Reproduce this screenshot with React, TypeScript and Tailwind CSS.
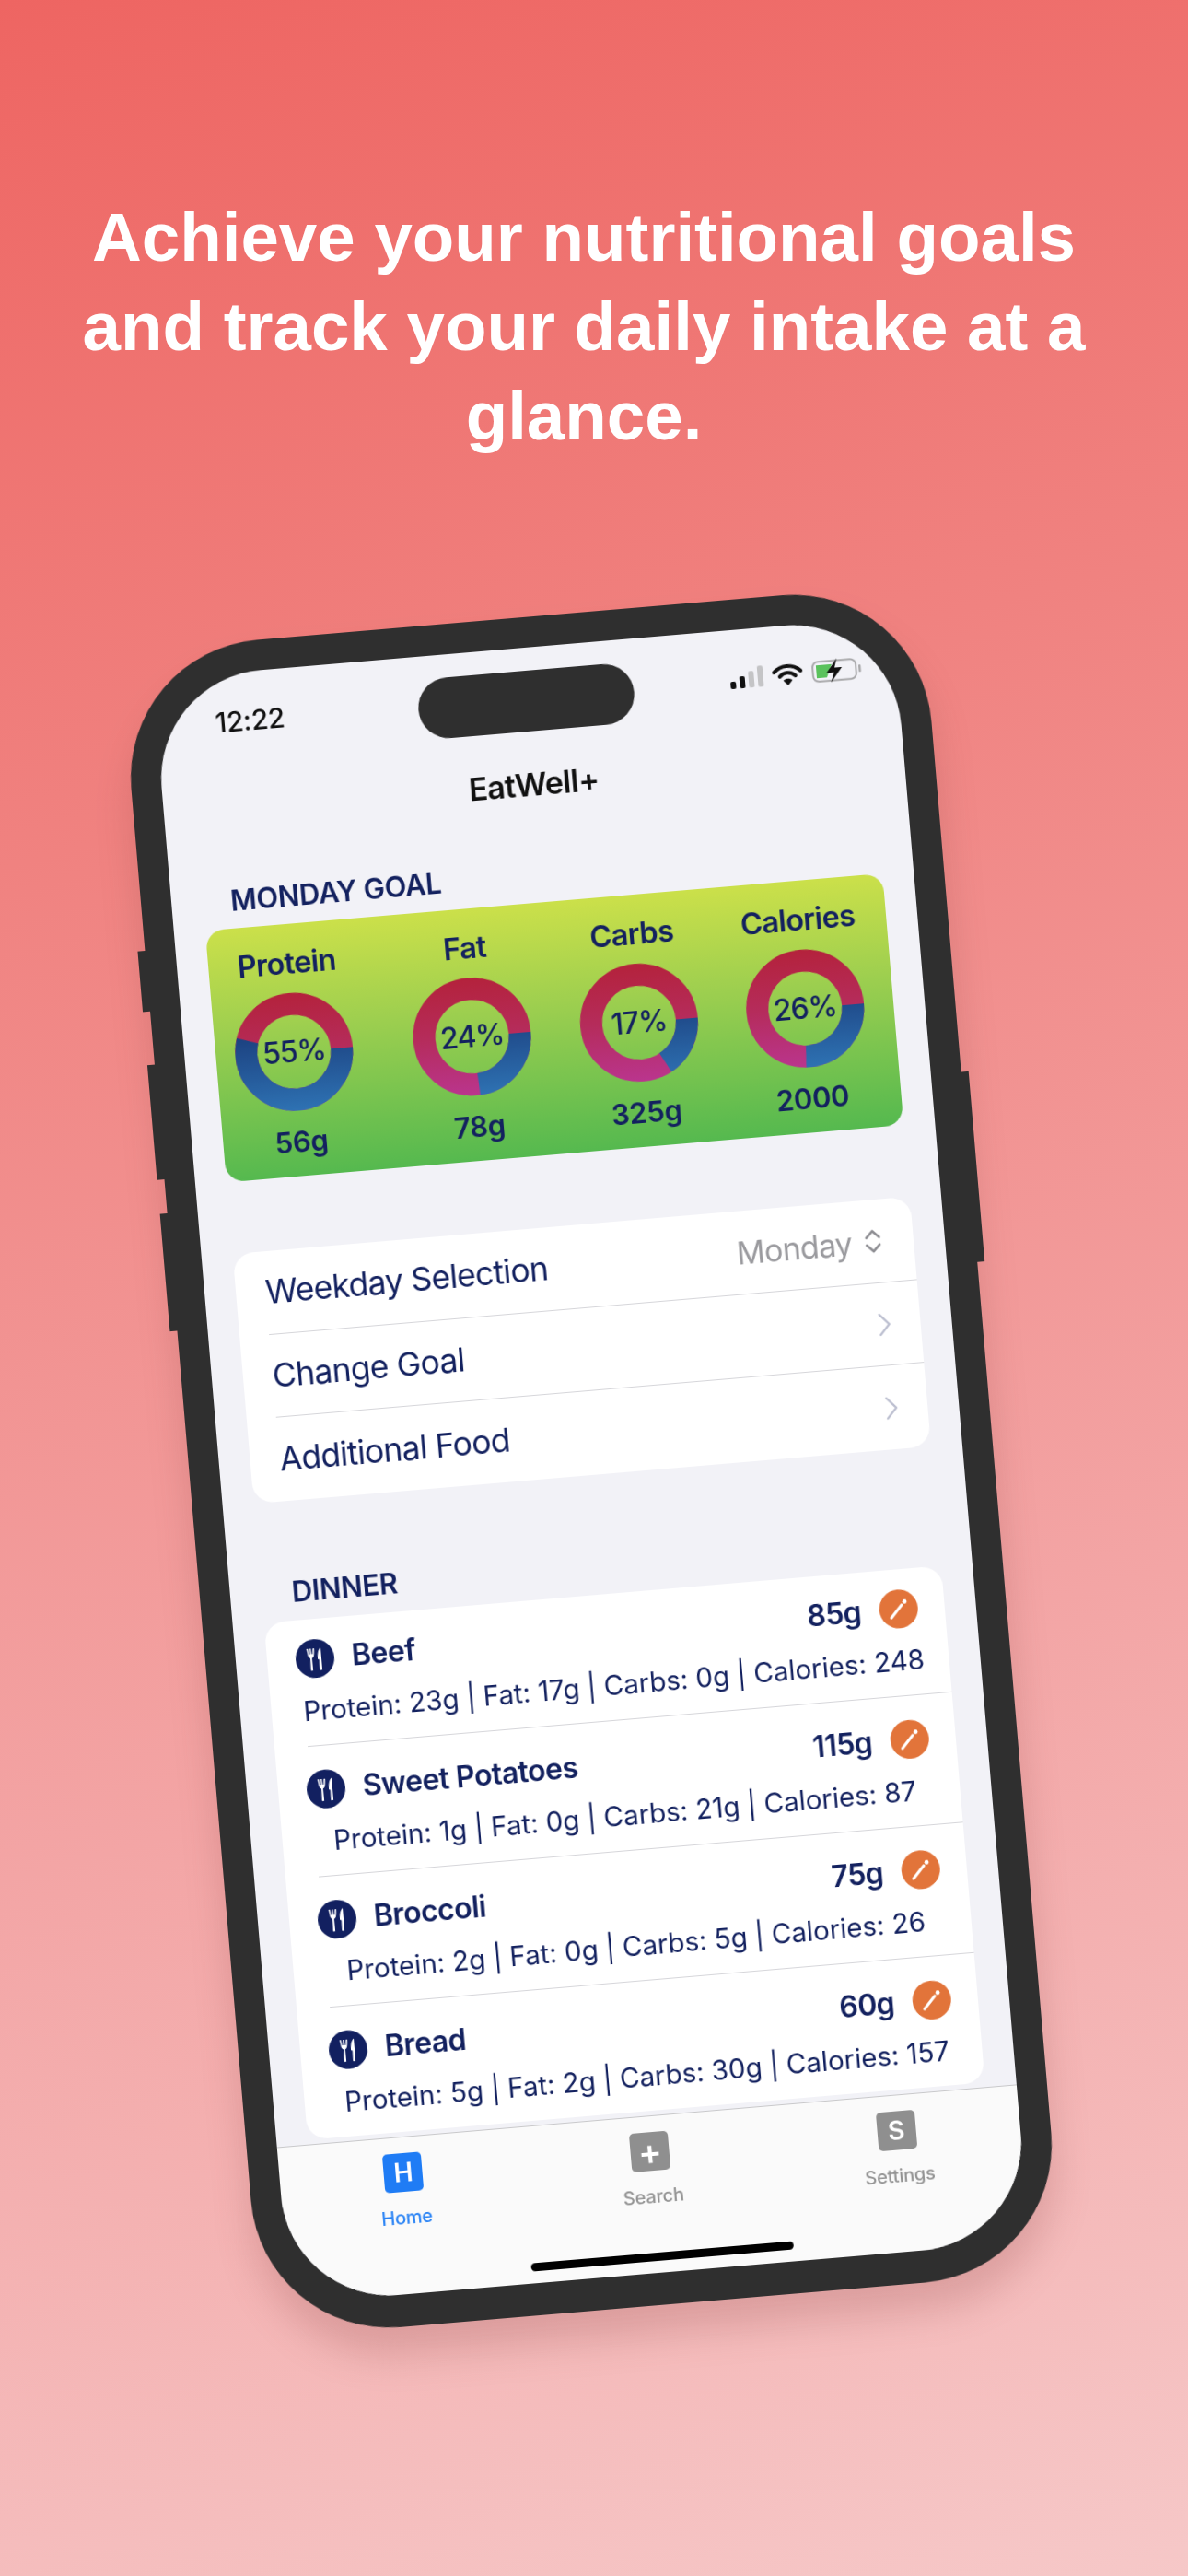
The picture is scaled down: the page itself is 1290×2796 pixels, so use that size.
import React from "react";

const goals = [
  { label: "Protein", pct: 55, value: "56g", cls: "ml-[21px]" },
  { label: "Fat", pct: 24, value: "78g", cls: "ml-[66px]" },
  { label: "Carbs", pct: 17, value: "325g", cls: "ml-[54px]" },
  { label: "Calories", pct: 26, value: "2000", cls: "ml-[53px]" },
];

const foods = [
  { name: "Beef", weight: "85g", info: "Protein: 23g | Fat: 17g | Carbs: 0g | Calories: 248", cls: "pt-[22px] pb-[20px] border-b" },
  { name: "Sweet Potatoes", weight: "115g", info: "Protein: 1g | Fat: 0g | Carbs: 21g | Calories: 87", cls: "pt-[26px] pb-[20px] border-b" },
  { name: "Broccoli", weight: "75g", info: "Protein: 2g | Fat: 0g | Carbs: 5g | Calories: 26", cls: "pt-[26px] pb-[20px] border-b" },
  { name: "Bread", weight: "60g", info: "Protein: 5g | Fat: 2g | Carbs: 30g | Calories: 157", cls: "pt-[26px] pb-[20px]" },
];

function Ring({ pct, id }: { pct: number; id: string }) {
  const r = 52;
  const c = 2 * Math.PI * r;
  return (
    <div className="relative w-[128px] h-[128px]">
      <svg viewBox="0 0 128 128" className="w-full h-full">
        <defs>
          <linearGradient id={`rest-${id}`} gradientUnits="userSpaceOnUse" x1="0" y1="0" x2="0" y2="128">
            <stop offset="0" stopColor="#b4223c" />
            <stop offset="0.5" stopColor="#b52c5c" />
            <stop offset="1" stopColor="#ba358e" />
          </linearGradient>
          <linearGradient id={`fill-${id}`} gradientUnits="userSpaceOnUse" x1="0" y1="40" x2="0" y2="128">
            <stop offset="0" stopColor="#1b3f7e" />
            <stop offset="1" stopColor="#2e72b3" />
          </linearGradient>
        </defs>
        <circle cx="64" cy="64" r={r} fill="none" stroke={`url(#rest-${id})`} strokeWidth="24" />
        <circle cx="64" cy="64" r={r} fill="none" stroke={`url(#fill-${id})`} strokeWidth="24" strokeDasharray={`${(pct / 100) * c} ${c}`} />
      </svg>
      <div className="absolute inset-0 flex items-center justify-center text-[32px] font-medium tracking-[-0.03em] text-[#13215f]">{pct}%</div>
    </div>
  );
}

function Utensils() {
  return (
    <svg viewBox="0 0 42 42" className="w-[42px] h-[42px] shrink-0">
      <circle cx="21" cy="21" r="21" fill="#122060" />
      <path d="M12.5 10 L13.5 17 C13.7 19 15 20 16 20.6 L15.6 33 C15.6 34.6 18 34.6 18 33 L17.8 20.6 C19 20 20 19 20.2 17 L21 10 L19.4 10 L18.6 16 L17.6 16 L17.4 10 L16 10 L15.8 16 L14.8 16 L14.2 10 Z" fill="#fff" />
      <path d="M28 9.5 C25 11.5 24 16 24 22 L25.6 22.4 L25.3 33 C25.3 34.6 28 34.6 28 33 Z" fill="#fff" />
    </svg>
  );
}

function Pencil() {
  return (
    <svg viewBox="0 0 42 42" className="w-[42px] h-[42px] shrink-0">
      <circle cx="21" cy="21" r="21" fill="#e2743a" />
      <path d="M12.5 30 L24.5 17" stroke="#fff" strokeWidth="3.2" strokeLinecap="round" />
      <circle cx="28" cy="13.5" r="2.4" fill="#fff" />
    </svg>
  );
}

function ChevronRight() {
  return (
    <svg viewBox="0 0 14 26" className="w-[14px] h-[26px]">
      <path d="M2 2 L12 13 L2 24" fill="none" stroke="#bcbfd0" strokeWidth="2.4" strokeLinecap="round" strokeLinejoin="round" />
    </svg>
  );
}

function Tab({ letter, label, active, big }: { letter: string; label: string; active?: boolean; big?: boolean }) {
  return (
    <div className="flex flex-col items-center">
      <div className={`w-[42px] h-[42px] rounded-[5px] flex items-center justify-center text-white font-semibold ${big ? "text-[38px] leading-none" : "text-[28px]"} ${active ? "bg-[#1f7cf5]" : "bg-[#8f8f8f]"}`}>
        {letter}
      </div>
      <div className={`mt-[16px] leading-[24px] text-[20px] font-medium tracking-[-0.01em] ${active ? "text-[#2b84f5]" : "text-[#939393]"}`}>{label}</div>
    </div>
  );
}

export default function App() {
  return (
    <div className="w-[1290px] h-[2796px] overflow-hidden pt-[209px] bg-[linear-gradient(165deg,#ee6562_0%,#f08280_30%,#f3a5a5_65%,#f6c8c8_100%)] [font-family:'Inter',sans-serif]">
      <h1 className="w-[1130px] ml-[69px] text-center text-white font-bold text-[74.5px] leading-[97px] blur-[0.5px] [font-family:'Liberation_Sans',Arial,sans-serif]">
        Achieve your nutritional goals and track your daily intake at a glance.
      </h1>

      <div className="relative ml-[206px] mt-[167px] w-[872px] h-[1838px] rounded-[150px] bg-[#2f2f2f] pt-[33px] pl-[33px] pr-[33px] pb-[35px] rotate-[-4.85deg] blur-[0.7px] shadow-[0_30px_40px_rgba(130,60,60,0.22)]">
        {/* side buttons */}
        <div className="absolute left-[-8px] top-[326px] w-[10px] h-[66px] bg-[#2f2f2f]" />
        <div className="absolute left-[-8px] top-[450px] w-[10px] h-[125px] bg-[#2f2f2f]" />
        <div className="absolute left-[-8px] top-[612px] w-[10px] h-[128px] bg-[#2f2f2f]" />
        <div className="absolute right-[-8px] top-[532px] w-[10px] h-[207px] bg-[#2f2f2f]" />

        <div className="relative w-full h-full rounded-[118px] overflow-hidden bg-[#f2f2f7] flex flex-col">
          {/* status bar */}
          <div className="h-[106px] shrink-0 flex items-center justify-between pl-[64px] pr-[38px]">
            <span className="text-[30px] font-medium tracking-[-0.01em] text-[#111]">12:22</span>
            <div className="flex items-center gap-[10px]">
              <svg viewBox="0 0 37 24" className="w-[37px] h-[24px]">
                <rect x="1" y="15" width="6" height="8" rx="2" fill="#111" />
                <rect x="11" y="10" width="6" height="13" rx="2" fill="#111" />
                <rect x="21" y="5" width="6" height="18" rx="2" fill="#c4c4c6" />
                <rect x="31" y="0" width="6" height="23" rx="2" fill="#c4c4c6" />
              </svg>
              <svg viewBox="0 0 33 24" className="w-[33px] h-[24px]">
                <path d="M2 9 C10 1 23 1 31 9" fill="none" stroke="#111" strokeWidth="4" strokeLinecap="round" />
                <path d="M8 14 C13 9 20 9 25 14" fill="none" stroke="#111" strokeWidth="4" strokeLinecap="round" />
                <path d="M16.5 24 L11.5 18.5 C14.5 16 18.5 16 21.5 18.5 Z" fill="#111" />
              </svg>
              <svg viewBox="0 0 54 26" className="w-[54px] h-[26px]">
                <rect x="1.2" y="2.2" width="47" height="21.5" rx="6" fill="none" stroke="#a9a9ab" strokeWidth="2" />
                <rect x="51" y="9" width="2.5" height="8" rx="1" fill="#a9a9ab" />
                <path d="M5 6 H22 L16 20 H5 Z" fill="#5ac25c" />
                <path d="M28 0 L16 15 H24 L20 26 L33 10 H25 Z" fill="#111" />
              </svg>
            </div>
          </div>
          <div className="absolute left-[285px] top-[25px] w-[235px] h-[66px] rounded-full bg-[#2f2f2f]" />

          {/* title */}
          <div className="h-[84px] shrink-0 flex items-center justify-center text-[34px] font-semibold tracking-[-0.015em] text-[#111]">EatWell+</div>

          <div className="ml-[34px] w-[738px] flex-1 flex flex-col min-h-0">
            <div className="mt-[40px] pl-[30px] leading-[34px] text-[31px] font-semibold tracking-[-0.01em] text-[#13215f]">MONDAY GOAL</div>

            <div className="mt-[13px] h-[274px] shrink-0 rounded-[20px] bg-[linear-gradient(180deg,#cbe04a_0%,#9ecf4f_40%,#55b94f_100%)] pt-[25px] flex">
              {goals.map((g) => (
                <div key={g.label} className={`${g.cls} w-[128px] flex flex-col items-center text-[#13215f]`}>
                  <div className="leading-[36px] text-[32.5px] font-semibold tracking-[-0.02em] whitespace-nowrap">{g.label}</div>
                  <div className="mt-[14px]"><Ring pct={g.pct} id={g.label} /></div>
                  <div className="mt-[16px] leading-[36px] text-[31px] font-semibold tracking-[-0.01em]">{g.value}</div>
                </div>
              ))}
            </div>

            <div className="mt-[78px] rounded-[22px] bg-white pl-[32px] text-[#13215f] text-[35.5px] tracking-[-0.02em] shrink-0">
              <div className="h-[91px] flex items-center justify-between pr-[34px] border-b border-[#d6d6da]">
                <span>Weekday Selection</span>
                <span className="flex items-center gap-[13px] text-[34px] text-[#9a9a9e]">
                  Monday
                  <svg viewBox="0 0 20 28" className="w-[20px] h-[28px]">
                    <path d="M3 10 L10 3 L17 10 M3 18 L10 25 L17 18" fill="none" stroke="#8e8e93" strokeWidth="2.6" strokeLinecap="round" strokeLinejoin="round" />
                  </svg>
                </span>
              </div>
              <div className="h-[90px] flex items-center justify-between pr-[32px] border-b border-[#d6d6da]">
                <span>Change Goal</span>
                <ChevronRight />
              </div>
              <div className="h-[91px] flex items-center justify-between pr-[32px]">
                <span>Additional Food</span>
                <ChevronRight />
              </div>
            </div>

            <div className="mt-[82px] pl-[33px] leading-[34px] text-[31px] font-semibold tracking-[-0.01em] text-[#13215f]">DINNER</div>

            <div className="mt-[14px] rounded-[22px] bg-white pl-[36px] text-[#13215f] shrink-0">
              {foods.map((f) => (
                <div key={f.name} className={`${f.cls} border-[#d6d6da]`}>
                  <div className="flex items-center justify-between pr-[29px]">
                    <div className="flex items-center gap-[19px] -ml-[5px]">
                      <Utensils />
                      <span className="leading-none text-[32px] font-semibold tracking-[-0.015em]">{f.name}</span>
                    </div>
                    <div className="flex items-center gap-[20px]">
                      <span className="leading-none text-[32px] font-semibold tracking-[-0.02em]">{f.weight}</span>
                      <Pencil />
                    </div>
                  </div>
                  <div className="mt-[17px] -ml-[28px] text-center leading-[36px] text-[29.5px] whitespace-nowrap">{f.info}</div>
                </div>
              ))}
            </div>
          </div>

          {/* tab bar */}
          <div className="relative h-[171px] shrink-0 bg-[#fafafa] border-t border-[#c9c9cb] pt-[17px] grid grid-cols-3 items-start">
            <Tab letter="H" label="Home" active />
            <Tab letter="+" label="Search" big />
            <Tab letter="S" label="Settings" />
            <div className="absolute left-[264px] bottom-[13px] w-[286px] h-[9px] rounded-full bg-black" />
          </div>
        </div>
      </div>
    </div>
  );
}
